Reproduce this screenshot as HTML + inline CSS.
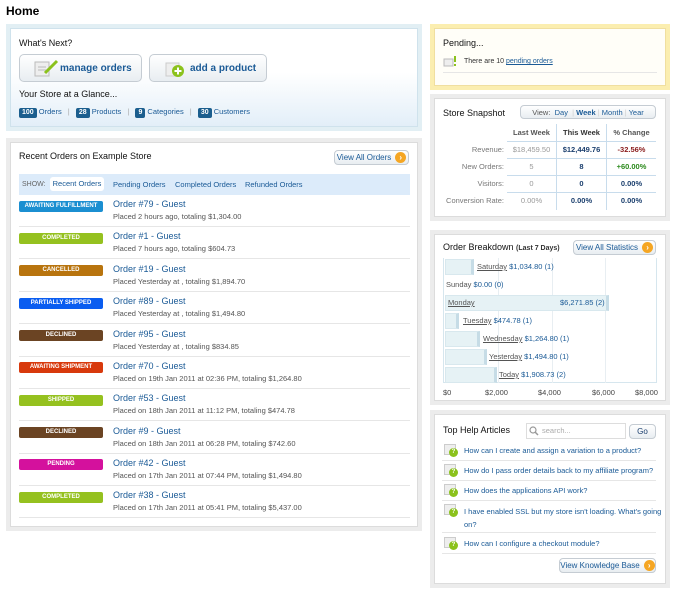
<!DOCTYPE html>
<html><head><style>
*{margin:0;padding:0;box-sizing:border-box}
body{width:680px;height:597px;background:#fff;font-family:"Liberation Sans",Arial,sans-serif;font-size:8px;color:#333;position:relative;overflow:hidden}
.a{position:absolute}
a,.lk{color:#1a5a96;text-decoration:none}
.panel{position:absolute;border:4px solid #ececec;background:#fff}
.panel .in{position:absolute;inset:0;border:1px solid #dcdcdc}
.btn{position:absolute;border:1px solid #c5ccd3;border-radius:4px;background:linear-gradient(#fff,#e8edf1);color:#1a5a96;font-size:8px;text-align:center;white-space:nowrap}
.arrow{display:inline-block;width:11px;height:11px;border-radius:50%;background:#f5a623;color:#fff;font-size:8px;line-height:11px;text-align:center;vertical-align:middle;margin-left:4px;font-weight:bold}
.badge{position:absolute;left:19px;width:84px;height:11px;border-radius:2px;color:#fff;font-size:6px;font-weight:bold;text-align:center;line-height:11px}
.ot{position:absolute;left:113px;font-size:9px;color:#1a5a96}
.os{position:absolute;left:113px;font-size:7.5px;color:#555}
.sep{position:absolute;left:19px;width:391px;height:1px;background:#e6e6e6}
.pill{display:inline-block;background:#1b5e8e;color:#fff;font-weight:bold;border-radius:2px;padding:0 3px;font-size:7px;line-height:10px}
.td{position:absolute;font-size:7.5px;text-align:center}
.hl{position:absolute;left:464px;font-size:7.5px;color:#1a5a96;white-space:nowrap}
.hi{position:absolute;left:444px;width:12px;height:11px;background:#eee;border:1px solid #ccc}
.hi:after{content:"?";position:absolute;right:-3px;bottom:-3px;width:9px;height:9px;border-radius:50%;background:#8bc21c;color:#fff;font-size:6px;line-height:9px;text-align:center;font-weight:bold}
.hs{position:absolute;left:442px;width:214px;height:1px;background:#e6e6e6}
.bar{position:absolute;left:445px;height:16px;background:#e6f2f5;border:1px solid #d8e8ee;border-right:3px solid #c6dce6}
.bl{position:absolute;font-size:7.5px;color:#1a5a96}
.bl u{color:#555}
</style></head><body>
<div class="a" style="left:6px;top:4px;font-size:12px;font-weight:bold;color:#000">Home</div>

<div class="a" style="left:6px;top:24px;width:416px;height:107px;border:4px solid #e2eff4;background:linear-gradient(#fff 0%,#fff 45%,#e2eef8 100%)"><div class="a" style="inset:0;border:1px solid #cfe2ec"></div></div>
<div class="a" style="left:19px;top:38px;font-size:9px;color:#111">What's Next?</div>
<div class="btn" style="left:19px;top:54px;width:123px;height:28px;border-radius:5px;font-size:10px;font-weight:bold;line-height:27px;text-align:left;padding-left:40px">manage orders</div>
<svg class="a" style="left:33px;top:59px" width="26" height="18"><rect x="2" y="3" width="14" height="14" fill="#eee" stroke="#bbb"/><line x1="5" y1="8" x2="13" y2="8" stroke="#bbb"/><line x1="5" y1="11" x2="13" y2="11" stroke="#bbb"/><line x1="12" y1="14" x2="24" y2="2" stroke="#8bc21c" stroke-width="3"/></svg>
<div class="btn" style="left:149px;top:54px;width:118px;height:28px;border-radius:5px;font-size:10px;font-weight:bold;line-height:27px;text-align:left;padding-left:40px">add a product</div>
<svg class="a" style="left:164px;top:57px" width="22" height="22"><rect x="2" y="6" width="13" height="13" fill="#eee" stroke="#ccc"/><circle cx="14" cy="14" r="6" fill="#8bc21c"/><path d="M14 10.5v7M10.5 14h7" stroke="#fff" stroke-width="2"/></svg>
<div class="a" style="left:19px;top:89px;font-size:9px;color:#111">Your Store at a Glance...</div>
<div class="a lk" style="left:19px;top:107px;font-size:7.5px"><span class="pill">100</span> Orders <span style="color:#aaa;margin:0 4px">|</span> <span class="pill">28</span> Products <span style="color:#aaa;margin:0 4px">|</span> <span class="pill">9</span> Categories <span style="color:#aaa;margin:0 4px">|</span> <span class="pill">30</span> Customers</div>

<div class="panel" style="left:6px;top:138px;width:416px;height:393px"><div class="in"></div></div>
<div class="a" style="left:19px;top:151px;font-size:9px;color:#111">Recent Orders on Example Store</div>
<div class="btn" style="left:334px;top:150px;width:75px;height:15px;line-height:14px">View All Orders<span class="arrow">›</span></div>
<div class="a" style="left:19px;top:174px;width:391px;height:21px;background:#dcebfa"></div>
<div class="a" style="left:22px;top:181px;font-size:7px;color:#666">SHOW:</div>
<div class="a" style="left:50px;top:177px;width:54px;height:14px;background:#fff;border-radius:3px;color:#1a5a96;font-size:7.5px;text-align:center;line-height:14px">Recent Orders</div>
<div class="a lk" style="left:113px;top:180px;font-size:7.5px">Pending Orders</div>
<div class="a lk" style="left:175px;top:180px;font-size:7.5px">Completed Orders</div>
<div class="a lk" style="left:245px;top:180px;font-size:7.5px">Refunded Orders</div>

<div class="badge" style="top:201px;background:#1b8fd1">AWAITING FULFILLMENT</div>
<div class="ot" style="top:199px">Order #79 - Guest</div><div class="os" style="top:212px">Placed 2 hours ago, totaling $1,304.00</div><div class="sep" style="top:226px"></div>
<div class="badge" style="top:233px;background:#95c11f">COMPLETED</div>
<div class="ot" style="top:231px">Order #1 - Guest</div><div class="os" style="top:244px">Placed 7 hours ago, totaling $604.73</div><div class="sep" style="top:258px"></div>
<div class="badge" style="top:265px;background:#b8740e">CANCELLED</div>
<div class="ot" style="top:264px">Order #19 - Guest</div><div class="os" style="top:277px">Placed Yesterday at , totaling $1,894.70</div><div class="sep" style="top:291px"></div>
<div class="badge" style="top:298px;background:#0a5df0">PARTIALLY SHIPPED</div>
<div class="ot" style="top:296px">Order #89 - Guest</div><div class="os" style="top:309px">Placed Yesterday at , totaling $1,494.80</div><div class="sep" style="top:323px"></div>
<div class="badge" style="top:330px;background:#6b4423">DECLINED</div>
<div class="ot" style="top:329px">Order #95 - Guest</div><div class="os" style="top:342px">Placed Yesterday at , totaling $834.85</div><div class="sep" style="top:356px"></div>
<div class="badge" style="top:362px;background:#d8390c">AWAITING SHIPMENT</div>
<div class="ot" style="top:361px">Order #70 - Guest</div><div class="os" style="top:374px">Placed on 19th Jan 2011 at 02:36 PM, totaling $1,264.80</div><div class="sep" style="top:388px"></div>
<div class="badge" style="top:395px;background:#95c11f">SHIPPED</div>
<div class="ot" style="top:393px">Order #53 - Guest</div><div class="os" style="top:406px">Placed on 18th Jan 2011 at 11:12 PM, totaling $474.78</div><div class="sep" style="top:420px"></div>
<div class="badge" style="top:427px;background:#6b4423">DECLINED</div>
<div class="ot" style="top:426px">Order #9 - Guest</div><div class="os" style="top:439px">Placed on 18th Jan 2011 at 06:28 PM, totaling $742.60</div><div class="sep" style="top:453px"></div>
<div class="badge" style="top:459px;background:#d4119d">PENDING</div>
<div class="ot" style="top:458px">Order #42 - Guest</div><div class="os" style="top:471px">Placed on 17th Jan 2011 at 07:44 PM, totaling $1,494.80</div><div class="sep" style="top:485px"></div>
<div class="badge" style="top:492px;background:#95c11f">COMPLETED</div>
<div class="ot" style="top:490px">Order #38 - Guest</div><div class="os" style="top:503px">Placed on 17th Jan 2011 at 05:41 PM, totaling $5,437.00</div><div class="sep" style="top:517px"></div>

<div class="a" style="left:430px;top:24px;width:240px;height:66px;border:4px solid #fbeeb0;background:#fffef8"><div class="a" style="inset:0;border:1px solid #f0dfa0"></div></div>
<div class="a" style="left:443px;top:38px;font-size:9px;color:#111">Pending...</div>
<svg class="a" style="left:443px;top:56px" width="14" height="11"><rect x="1" y="3" width="9" height="7" fill="#eee" stroke="#bbb"/><rect x="11" y="0" width="2" height="6" fill="#8bc21c"/><rect x="11" y="8" width="2" height="2" fill="#8bc21c"/></svg>
<div class="a" style="left:464px;top:58px;font-size:7px;color:#333">There are 10 <a style="text-decoration:underline">pending orders</a></div>
<div class="a" style="left:443px;top:72px;width:214px;height:1px;background:#e6e6e6"></div>

<div class="panel" style="left:430px;top:94px;width:240px;height:127px"><div class="in"></div></div>
<div class="a" style="left:443px;top:108px;font-size:9px;color:#111">Store Snapshot</div>
<div class="btn" style="left:520px;top:105px;width:136px;height:14px;line-height:13px;font-size:7.5px;color:#1a5a96"><span style="color:#555">View:</span>&nbsp; Day &nbsp;<span style="color:#ccc">|</span> <b>Week</b> <span style="color:#ccc">|</span> Month <span style="color:#ccc">|</span> Year</div>
<div class="a" style="left:556px;top:124px;width:1px;height:86px;background:#c8dcec"></div>
<div class="a" style="left:606px;top:124px;width:1px;height:86px;background:#c8dcec"></div>
<div class="a" style="left:507px;top:141px;width:149px;height:1px;background:#c8dcec"></div>
<div class="a" style="left:507px;top:158px;width:149px;height:1px;background:#c8dcec"></div>
<div class="a" style="left:507px;top:175px;width:149px;height:1px;background:#c8dcec"></div>
<div class="a" style="left:507px;top:192px;width:149px;height:1px;background:#c8dcec"></div>
<div class="td" style="left:507px;top:128px;width:49px;color:#555;font-weight:bold">Last Week</div>
<div class="td" style="left:557px;top:128px;width:49px;color:#333;font-weight:bold">This Week</div>
<div class="td" style="left:607px;top:128px;width:49px;color:#555;font-weight:bold">% Change</div>
<div class="td" style="left:430px;top:145px;width:74px;text-align:right;color:#777">Revenue:</div>
<div class="td" style="left:430px;top:162px;width:74px;text-align:right;color:#777">New Orders:</div>
<div class="td" style="left:430px;top:179px;width:74px;text-align:right;color:#777">Visitors:</div>
<div class="td" style="left:430px;top:196px;width:74px;text-align:right;color:#777">Conversion Rate:</div>
<div class="td" style="left:507px;top:145px;width:49px;color:#999">$18,459.50</div>
<div class="td" style="left:507px;top:162px;width:49px;color:#999">5</div>
<div class="td" style="left:507px;top:179px;width:49px;color:#999">0</div>
<div class="td" style="left:507px;top:196px;width:49px;color:#999">0.00%</div>
<div class="td" style="left:557px;top:145px;width:49px;color:#1b3f6e;font-weight:bold">$12,449.76</div>
<div class="td" style="left:557px;top:162px;width:49px;color:#1b3f6e;font-weight:bold">8</div>
<div class="td" style="left:557px;top:179px;width:49px;color:#1b3f6e;font-weight:bold">0</div>
<div class="td" style="left:557px;top:196px;width:49px;color:#1b3f6e;font-weight:bold">0.00%</div>
<div class="td" style="left:607px;top:145px;width:49px;color:#8a1c1c;font-weight:bold">-32.56%</div>
<div class="td" style="left:607px;top:162px;width:49px;color:#2c8a1c;font-weight:bold">+60.00%</div>
<div class="td" style="left:607px;top:179px;width:49px;color:#1b3f6e;font-weight:bold">0.00%</div>
<div class="td" style="left:607px;top:196px;width:49px;color:#1b3f6e;font-weight:bold">0.00%</div>

<div class="panel" style="left:430px;top:230px;width:240px;height:175px"><div class="in"></div></div>
<div class="a" style="left:443px;top:242px;font-size:9px;color:#111">Order Breakdown <span style="font-size:7px;font-weight:bold;color:#333">(Last 7 Days)</span></div>
<div class="btn" style="left:573px;top:240px;width:83px;height:15px;line-height:14px">View All Statistics<span class="arrow">›</span></div>
<div class="a" style="left:443px;top:258px;width:214px;height:125px;border:1px solid #d6e6ee;border-top:none"></div>
<div class="a" style="left:498px;top:258px;width:1px;height:125px;background:#e8eef2"></div>
<div class="a" style="left:552px;top:258px;width:1px;height:125px;background:#e8eef2"></div>
<div class="a" style="left:605px;top:258px;width:1px;height:125px;background:#e8eef2"></div>
<div class="bar" style="top:259px;width:29px"></div><div class="bl" style="left:477px;top:262px"><u>Saturday</u> $1,034.80 (1)</div>
<div class="bl" style="left:446px;top:280px"><span style="color:#555">Sunday</span> $0.00 (0)</div>
<div class="bar" style="top:295px;width:164px"></div><div class="bl" style="left:448px;top:298px"><u>Monday</u></div><div class="bl" style="left:560px;top:298px">$6,271.85 (2)</div>
<div class="bar" style="top:313px;width:14px"></div><div class="bl" style="left:463px;top:316px"><u>Tuesday</u> $474.78 (1)</div>
<div class="bar" style="top:331px;width:35px"></div><div class="bl" style="left:483px;top:334px"><u>Wednesday</u> $1,264.80 (1)</div>
<div class="bar" style="top:349px;width:42px"></div><div class="bl" style="left:489px;top:352px"><u>Yesterday</u> $1,494.80 (1)</div>
<div class="bar" style="top:367px;width:52px"></div><div class="bl" style="left:499px;top:370px"><u>Today</u> $1,908.73 (2)</div>
<div class="a" style="left:443px;top:388px;font-size:7.5px;color:#444">$0</div>
<div class="a" style="left:485px;top:388px;font-size:7.5px;color:#444">$2,000</div>
<div class="a" style="left:538px;top:388px;font-size:7.5px;color:#444">$4,000</div>
<div class="a" style="left:592px;top:388px;font-size:7.5px;color:#444">$6,000</div>
<div class="a" style="left:635px;top:388px;font-size:7.5px;color:#444">$8,000</div>

<div class="panel" style="left:430px;top:410px;width:240px;height:178px"><div class="in"></div></div>
<div class="a" style="left:443px;top:425px;font-size:9px;color:#111">Top Help Articles</div>
<div class="a" style="left:526px;top:423px;width:100px;height:16px;border:1px solid #ddd;background:#fff;font-size:7.5px;color:#aaa;line-height:14px;padding-left:15px">search...</div>
<svg class="a" style="left:529px;top:426px" width="10" height="10"><circle cx="4" cy="4" r="3" fill="none" stroke="#999" stroke-width="1.2"/><line x1="6" y1="6" x2="9" y2="9" stroke="#999" stroke-width="1.5"/></svg>
<div class="btn" style="left:629px;top:424px;width:27px;height:15px;line-height:14px;color:#1b3f6e">Go</div>
<div class="hi" style="top:444px"></div><div class="hl" style="top:446px">How can I create and assign a variation to a product?</div><div class="hs" style="top:460px"></div>
<div class="hi" style="top:464px"></div><div class="hl" style="top:466px">How do I pass order details back to my affiliate program?</div><div class="hs" style="top:480px"></div>
<div class="hi" style="top:484px"></div><div class="hl" style="top:486px">How does the applications API work?</div><div class="hs" style="top:500px"></div>
<div class="hi" style="top:504px"></div><div class="hl" style="top:506px;line-height:12.5px">I have enabled SSL but my store isn't loading. What's going<br>on?</div><div class="hs" style="top:532px"></div>
<div class="hi" style="top:537px"></div><div class="hl" style="top:539px">How can I configure a checkout module?</div><div class="hs" style="top:553px"></div>
<div class="btn" style="left:559px;top:558px;width:97px;height:15px;line-height:14px">View Knowledge Base<span class="arrow">›</span></div>
</body></html>
